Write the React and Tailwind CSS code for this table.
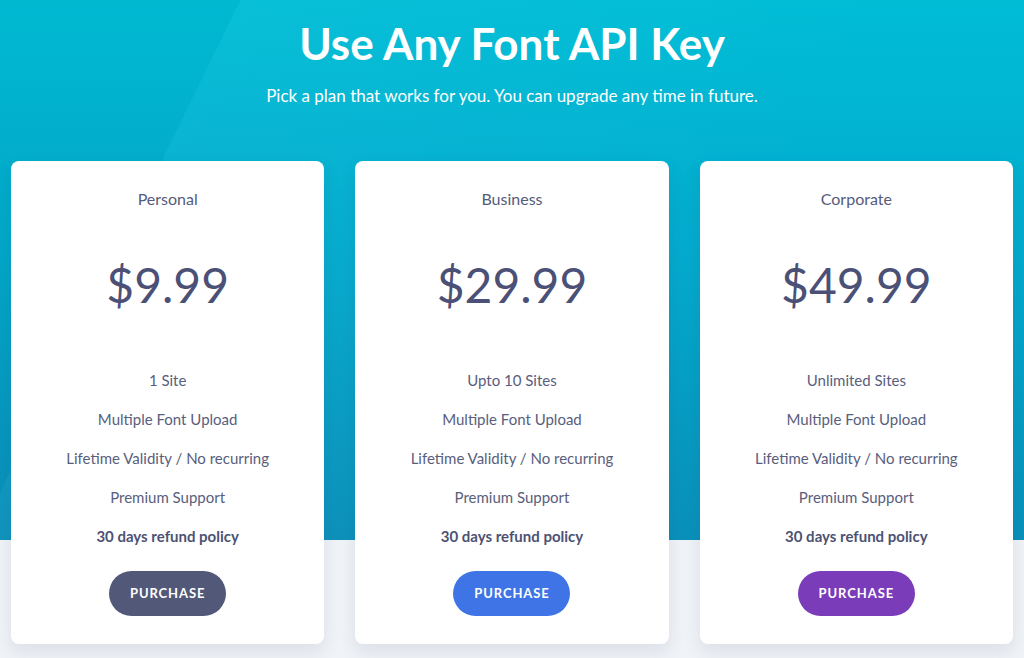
const plans = [
    { name: 'Personal', price: '$9.99', sites: '1 Site', btn: 'bg-[#525878]' },
    { name: 'Business', price: '$29.99', sites: 'Upto 10 Sites', btn: 'bg-[#3e74e5]' },
    { name: 'Corporate', price: '$49.99', sites: 'Unlimited Sites', btn: 'bg-[#7a3cb9]' },
];

const PlanCard = ({ plan }) => (
    <div className="bg-white rounded-lg flex flex-col items-center pt-[26px] pb-[28px] shadow-[0_8px_18px_rgba(40,60,90,0.10)]">
        <h3 className="text-[16px] leading-6 text-[#555b7c]">{plan.name}</h3>
        <div className="mt-[48px] text-[48px] leading-[52px] text-[#4b5077]">{plan.price}</div>
        <ul className="mt-[50px] text-[15px] leading-[39px] text-[#595e7d] text-center">
            <li>{plan.sites}</li>
            <li>Multiple Font Upload</li>
            <li>Lifetime Validity / No recurring</li>
            <li>Premium Support</li>
            <li className="font-bold text-[#4d5273]">30 days refund policy</li>
        </ul>
        <button className={`mt-[15px] w-[117px] h-[45px] rounded-full text-white text-[13px] font-bold tracking-[0.07em] ${plan.btn}`}>
            PURCHASE
        </button>
    </div>
);

export default function App() {
    return (
        <div
            className="min-h-[658px] font-['Lato','Noto_Sans',sans-serif] bg-[linear-gradient(180deg,#00bdd6_0px,#03aacd_260px,#0a90ba_540px,#f0f3f7_540px,#f0f3f7_100%)]"
        >
            {/* faint diagonal sheen on the header band */}
            <div className="h-[540px] -mb-[540px] bg-[linear-gradient(116deg,rgba(0,0,0,0.025)_0px,rgba(0,0,0,0.025)_216px,rgba(255,255,255,0.03)_216px,rgba(255,255,255,0)_70%)]" />
            <div className="relative pt-[21px] text-center">
                <h1 className="text-[44px] leading-[44px] font-bold text-white">Use Any Font API Key</h1>
                <p className="mt-[19px] text-[17px] leading-6 text-white">
                    Pick a plan that works for you. You can upgrade any time in future.
                </p>
            </div>
            <div className="relative mt-[53px] px-[11px] grid grid-cols-3 gap-[31px]">
                {plans.map(p => <PlanCard key={p.name} plan={p} />)}
            </div>
        </div>
    );
}
